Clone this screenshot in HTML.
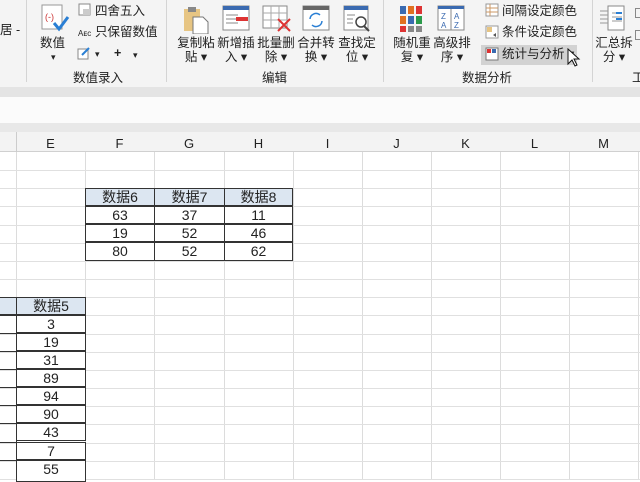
<!DOCTYPE html>
<html><head><meta charset="utf-8"><style>
*{margin:0;padding:0;box-sizing:border-box}
body{width:640px;height:480px;overflow:hidden;background:#fff;font-family:"Liberation Sans","Noto Sans CJK SC",sans-serif;position:relative;color:#222}
.a{position:absolute}
.t{font-size:12.5px;white-space:nowrap;line-height:15px;color:#222}
.c{text-align:center}
.two{line-height:13.5px}
.sep{position:absolute;width:1px;background:#d4d4d4}
.vl{position:absolute;top:152px;bottom:0;width:1px;background:#dcdcdc}
.hl{position:absolute;left:0;right:0;height:1px;background:#e0e0e0}
.cell{position:absolute;height:18.2px;border:1px solid #333;font-size:14px;text-align:center;line-height:17px;color:#222;background:#fff}
.hd{background:#dce6f1}
</style></head><body>
<div class="a" style="left:0;top:0;width:640px;height:87px;background:#f4f4f4"></div>
<div class="a" style="left:0;top:87px;width:640px;height:10px;background:#e4e4e4"></div>
<div class="a" style="left:0;top:97px;width:640px;height:26px;background:#fbfbfb"></div>
<div class="a" style="left:0;top:123px;width:640px;height:9px;background:#e8e8e8"></div>
<div class="a" style="left:0;top:132px;width:640px;height:20px;background:#f3f3f3;border-bottom:1px solid #d0d0d0"></div>

<div class="sep" style="left:26px;top:0;height:82px"></div>
<div class="sep" style="left:166px;top:0;height:82px"></div>
<div class="sep" style="left:383px;top:0;height:82px"></div>
<div class="sep" style="left:592px;top:0;height:82px"></div>
<div class="a t" style="left:0;top:23px">居 -</div>

<svg class="a" style="left:40px;top:3px" width="30" height="30"><rect x="2" y="2" width="20" height="24" fill="#fff" stroke="#999"/><text x="5" y="17" font-size="9" fill="#c33">(-)</text><path d="M14 20l5 6 9-12" stroke="#2a7fd4" stroke-width="3" fill="none"/></svg>
<div class="a t" style="left:40px;top:36px">数值</div>
<div class="a t" style="left:51px;top:50px;font-size:9px">▾</div>
<svg class="a" style="left:78px;top:3px" width="14" height="14"><rect x="1" y="1" width="11" height="11" fill="#fff" stroke="#888"/><rect x="5" y="6" width="7" height="6" fill="#ccc"/></svg>
<div class="a t" style="left:95px;top:4px">四舍五入</div>
<div class="a t" style="left:78px;top:26px;font-size:8px">Aᴇᴄ</div>
<div class="a t" style="left:95px;top:25px">只保留数值</div>
<svg class="a" style="left:77px;top:46px" width="14" height="14"><rect x="1" y="3" width="10" height="10" fill="#fff" stroke="#888"/><path d="M5 9l7-7" stroke="#2a7fd4" stroke-width="2"/></svg>
<div class="a t" style="left:95px;top:47px;font-size:9px">▾</div>
<div class="a t" style="left:114px;top:46px;font-weight:bold">+</div>
<div class="a t" style="left:133px;top:48px;font-size:9px">▾</div>
<div class="a t" style="left:73px;top:71px">数值录入</div>

<svg class="a" style="left:180px;top:4px" width="32" height="30"><rect x="4" y="5" width="16" height="22" fill="#e7c583"/><rect x="8" y="3" width="8" height="5" fill="#888"/><path d="M13 13h10l5 5v12h-15z" fill="#fff" stroke="#777"/></svg>
<svg class="a" style="left:222px;top:5px" width="30" height="28"><rect x="1" y="1" width="26" height="24" fill="#fff" stroke="#888"/><rect x="1" y="1" width="26" height="4" fill="#3a6ab0"/><path d="M4 10h12M4 14h12M4 18h12" stroke="#888"/><rect x="14" y="12" width="12" height="4" fill="#d33"/></svg>
<svg class="a" style="left:262px;top:5px" width="30" height="28"><rect x="1" y="1" width="24" height="22" fill="#fff" stroke="#888"/><path d="M1 8h24M1 15h24M9 1v22M17 1v22" stroke="#aaa"/><path d="M16 14l12 12M28 14l-12 12" stroke="#d33" stroke-width="2"/></svg>
<svg class="a" style="left:302px;top:5px" width="30" height="28"><rect x="1" y="1" width="26" height="24" fill="#fff" stroke="#888"/><rect x="1" y="1" width="26" height="4" fill="#666"/><path d="M8 14a6 6 0 0 1 10-4M20 16a6 6 0 0 1-10 4" stroke="#2a7fd4" stroke-width="1.5" fill="none"/></svg>
<svg class="a" style="left:343px;top:5px" width="30" height="30"><rect x="1" y="1" width="24" height="24" fill="#fff" stroke="#888"/><rect x="1" y="1" width="24" height="4" fill="#3a6ab0"/><path d="M4 10h8M4 14h6M4 18h6" stroke="#888"/><circle cx="18" cy="17" r="5" fill="none" stroke="#444" stroke-width="1.5"/><path d="M21 21l5 5" stroke="#444" stroke-width="2"/></svg>
<div class="a t c two" style="left:176px;top:37px;width:40px">复制粘<br>贴 ▾</div>
<div class="a t c two" style="left:216px;top:37px;width:40px">新增插<br>入 ▾</div>
<div class="a t c two" style="left:256px;top:37px;width:40px">批量删<br>除 ▾</div>
<div class="a t c two" style="left:296px;top:37px;width:40px">合并转<br>换 ▾</div>
<div class="a t c two" style="left:337px;top:37px;width:40px">查找定<br>位 ▾</div>
<div class="a t" style="left:262px;top:71px">编辑</div>

<svg class="a" style="left:398px;top:5px" width="26" height="28"><rect x="2" y="1" width="6" height="8" fill="#3a6ab0"/><rect x="10" y="1" width="6" height="8" fill="#e07020"/><rect x="18" y="1" width="6" height="8" fill="#d33"/><rect x="2" y="11" width="6" height="8" fill="#e07020"/><rect x="10" y="11" width="6" height="8" fill="#3a6ab0"/><rect x="18" y="11" width="6" height="8" fill="#2a9a4a"/><rect x="2" y="21" width="6" height="6" fill="#d33"/><rect x="10" y="21" width="6" height="6" fill="#888"/><rect x="18" y="21" width="6" height="6" fill="#888"/></svg>
<svg class="a" style="left:437px;top:5px" width="30" height="28"><rect x="1" y="1" width="26" height="24" fill="#fff" stroke="#888"/><rect x="1" y="1" width="26" height="3" fill="#3a6ab0"/><path d="M14 4v21" stroke="#888"/><text x="4" y="14" font-size="8" fill="#3a6ab0">Z</text><text x="17" y="14" font-size="8" fill="#3a6ab0">A</text><text x="4" y="23" font-size="8" fill="#3a6ab0">A</text><text x="17" y="23" font-size="8" fill="#3a6ab0">Z</text></svg>
<div class="a t c two" style="left:392px;top:37px;width:40px">随机重<br>复 ▾</div>
<div class="a t c two" style="left:432px;top:37px;width:40px">高级排<br>序 ▾</div>
<div class="a" style="left:481px;top:45px;width:96px;height:20px;background:#d2d2d2"></div>
<svg class="a" style="left:485px;top:3px" width="14" height="14"><rect x="1" y="1" width="12" height="12" fill="#fff" stroke="#999"/><path d="M1 5h12M1 9h12M5 1v12" stroke="#c96"/></svg>
<div class="a t" style="left:502px;top:4px">间隔设定颜色</div>
<svg class="a" style="left:485px;top:25px" width="14" height="14"><rect x="1" y="1" width="12" height="12" fill="#fff" stroke="#999"/><rect x="2" y="2" width="5" height="5" fill="#e7c583"/><path d="M8 10l3-2v4z" fill="#555"/></svg>
<div class="a t" style="left:502px;top:25px">条件设定颜色</div>
<svg class="a" style="left:485px;top:47px" width="14" height="14"><rect x="1" y="1" width="12" height="12" fill="#fff" stroke="#777"/><rect x="2" y="2" width="4" height="4" fill="#d33"/><rect x="7" y="2" width="4" height="4" fill="#3a6ab0"/></svg>
<div class="a t" style="left:502px;top:47px">统计与分析 ▾</div>
<svg class="a" style="left:567px;top:48px" width="14" height="20"><path d="M1 1v15l4-4 3 6 2-1-3-6h5z" fill="#fff" stroke="#111"/></svg>
<div class="a t" style="left:462px;top:71px">数据分析</div>

<svg class="a" style="left:598px;top:5px" width="30" height="28"><rect x="10" y="1" width="16" height="24" fill="#fff" stroke="#888"/><path d="M2 6h8M2 10h8M2 14h8M2 18h8M14 8h10M14 12h10M14 16h10" stroke="#999"/><path d="M24 8l-6 0M24 14l-6 0" stroke="#2a7fd4" stroke-width="2"/></svg>
<div class="a t c two" style="left:594px;top:37px;width:40px">汇总拆<br>分 ▾</div>
<div class="a t" style="left:632px;top:71px">工</div>
<div class="a" style="left:635px;top:8px;width:5px;height:10px;border:1px solid #888;border-right:none"></div>
<div class="a" style="left:635px;top:30px;width:5px;height:10px;border:1px solid #888;border-right:none"></div>

<div class="a" style="left:16px;top:132px;width:1px;height:20px;background:#ccc"></div>
<div class="a t c" style="left:16px;top:136px;width:69px;font-size:13px">E</div>
<div class="a t c" style="left:85px;top:136px;width:69px;font-size:13px">F</div>
<div class="a t c" style="left:154px;top:136px;width:70px;font-size:13px">G</div>
<div class="a t c" style="left:224px;top:136px;width:69px;font-size:13px">H</div>
<div class="a t c" style="left:293px;top:136px;width:69px;font-size:13px">I</div>
<div class="a t c" style="left:362px;top:136px;width:69px;font-size:13px">J</div>
<div class="a t c" style="left:431px;top:136px;width:69px;font-size:13px">K</div>
<div class="a t c" style="left:500px;top:136px;width:69px;font-size:13px">L</div>
<div class="a t c" style="left:569px;top:136px;width:69px;font-size:13px">M</div>

<div class="vl" style="left:16px"></div><div class="vl" style="left:85px"></div><div class="vl" style="left:154px"></div><div class="vl" style="left:224px"></div><div class="vl" style="left:293px"></div><div class="vl" style="left:362px"></div><div class="vl" style="left:431px"></div><div class="vl" style="left:500px"></div><div class="vl" style="left:569px"></div><div class="vl" style="left:638px"></div>
<div class="hl" style="top:170px"></div><div class="hl" style="top:188px"></div><div class="hl" style="top:206px"></div><div class="hl" style="top:225px"></div><div class="hl" style="top:243px"></div><div class="hl" style="top:261px"></div><div class="hl" style="top:279px"></div><div class="hl" style="top:297px"></div><div class="hl" style="top:315px"></div><div class="hl" style="top:334px"></div><div class="hl" style="top:352px"></div><div class="hl" style="top:370px"></div><div class="hl" style="top:388px"></div><div class="hl" style="top:406px"></div><div class="hl" style="top:424px"></div><div class="hl" style="top:443px"></div><div class="hl" style="top:461px"></div><div class="hl" style="top:479px"></div>

<div class="cell hd" style="left:85px;top:188px;width:70px">数据6</div>
<div class="cell hd" style="left:154px;top:188px;width:71px">数据7</div>
<div class="cell hd" style="left:224px;top:188px;width:69px">数据8</div>
<div class="cell" style="left:85px;top:206px;width:70px">63</div>
<div class="cell" style="left:154px;top:206px;width:71px">37</div>
<div class="cell" style="left:224px;top:206px;width:69px">11</div>
<div class="cell" style="left:85px;top:224px;width:70px">19</div>
<div class="cell" style="left:154px;top:224px;width:71px">52</div>
<div class="cell" style="left:224px;top:224px;width:69px">46</div>
<div class="cell" style="left:85px;top:242px;width:70px;height:19px">80</div>
<div class="cell" style="left:154px;top:242px;width:71px;height:19px">52</div>
<div class="cell" style="left:224px;top:242px;width:69px;height:19px">62</div>

<div class="cell hd" style="left:-5px;top:297px;width:22px"></div>
<div class="cell hd" style="left:16px;top:297px;width:70px">数据5</div>
<div class="cell" style="left:-5px;top:315px;width:22px;height:165px;border-bottom:none;background:transparent"></div>
<div class="cell" style="left:16px;top:315px;width:70px">3</div>
<div class="cell" style="left:16px;top:333px;width:70px">19</div>
<div class="cell" style="left:16px;top:351px;width:70px">31</div>
<div class="cell" style="left:16px;top:369px;width:70px">89</div>
<div class="cell" style="left:16px;top:387px;width:70px">94</div>
<div class="cell" style="left:16px;top:405px;width:70px">90</div>
<div class="cell" style="left:16px;top:423px;width:70px">43</div>
<div class="cell" style="left:16px;top:442px;width:70px">7</div>
<div class="cell" style="left:16px;top:460px;width:70px;height:22px">55</div>
<div class="a" style="left:0;top:333px;width:17px;height:1px;background:#333"></div>
<div class="a" style="left:0;top:351px;width:17px;height:1px;background:#333"></div>
<div class="a" style="left:0;top:369px;width:17px;height:1px;background:#333"></div>
<div class="a" style="left:0;top:387px;width:17px;height:1px;background:#333"></div>
<div class="a" style="left:0;top:405px;width:17px;height:1px;background:#333"></div>
<div class="a" style="left:0;top:423px;width:17px;height:1px;background:#333"></div>
<div class="a" style="left:0;top:442px;width:17px;height:1px;background:#333"></div>
<div class="a" style="left:0;top:460px;width:17px;height:1px;background:#333"></div>
</body></html>
